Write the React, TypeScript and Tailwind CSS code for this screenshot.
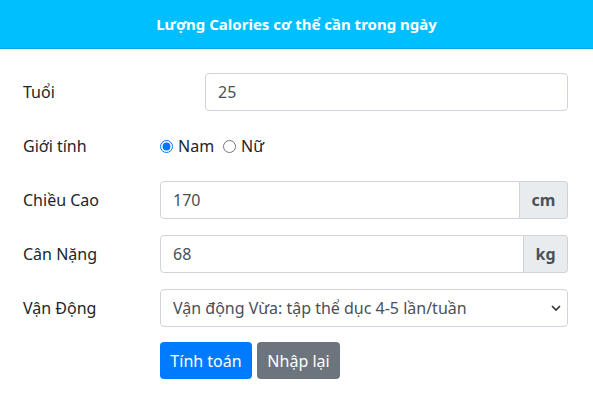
import { useState } from 'react';

const font = { fontFamily: '"Noto Sans", "Open Sans", sans-serif' };

function Row({ label, children }: { label: string; children: React.ReactNode }) {
  return (
    <div className="flex items-center h-[38px] mb-4">
      <label className="w-[137px] shrink-0 text-[16px] text-[#212529]">{label}</label>
      <div className="flex-1 flex items-center">{children}</div>
    </div>
  );
}

export default function App() {
  const [age, setAge] = useState('25');
  const [gender, setGender] = useState('nam');
  const [height, setHeight] = useState('170');
  const [weight, setWeight] = useState('68');

  const inputCls =
    'h-[38px] px-3 border border-[#ced4da] text-[16px] text-[#495057] bg-white outline-none';

  return (
    <div className="w-[593px] h-[404px] bg-white" style={font}>
      {/* Header */}
      <div className="h-[49px] bg-[#00bfff] border-b border-[#0aa6de] flex items-center justify-center">
        <h1 className="text-white font-bold text-[15px]">Lượng Calories cơ thể cần trong ngày</h1>
      </div>

      {/* Form */}
      <div className="pt-6 pl-[23px] pr-[25px]">
        <Row label="Tuổi">
          <input
            className={`${inputCls} ml-[45px] flex-1 rounded`}
            value={age}
            onChange={(e) => setAge(e.target.value)}
          />
        </Row>

        <Row label="Giới tính">
          <label className="flex items-center gap-[5px] text-[16px] text-[#212529] mr-[9px]">
            <input
              type="radio"
              name="gender"
              className="w-[13px] h-[13px] m-0 accent-[#0075ff]"
              checked={gender === 'nam'}
              onChange={() => setGender('nam')}
            />
            Nam
          </label>
          <label className="flex items-center gap-[5px] text-[16px] text-[#212529]">
            <input
              type="radio"
              name="gender"
              className="w-[13px] h-[13px] m-0"
              checked={gender === 'nu'}
              onChange={() => setGender('nu')}
            />
            Nữ
          </label>
        </Row>

        <Row label="Chiều Cao">
          <input
            className={`${inputCls} flex-1 min-w-0 rounded-l`}
            value={height}
            onChange={(e) => setHeight(e.target.value)}
          />
          <span className="h-[38px] w-[48px] flex items-center justify-center bg-[#e9ecef] border border-l-0 border-[#ced4da] rounded-r font-bold text-[16px] text-[#495057]">
            cm
          </span>
        </Row>

        <Row label="Cân Nặng">
          <input
            className={`${inputCls} flex-1 min-w-0 rounded-l`}
            value={weight}
            onChange={(e) => setWeight(e.target.value)}
          />
          <span className="h-[38px] w-[44px] flex items-center justify-center bg-[#e9ecef] border border-l-0 border-[#ced4da] rounded-r font-bold text-[16px] text-[#495057]">
            kg
          </span>
        </Row>

        <Row label="Vận Động">
          <div className="relative flex-1">
            <select
              className={`${inputCls} w-full rounded appearance-none`}
              style={font}
              defaultValue="vua"
            >
              <option value="it">Ít vận động</option>
              <option value="nhe">Vận động nhẹ: tập thể dục 1-3 lần/tuần</option>
              <option value="vua">Vận động Vừa: tập thể dục 4-5 lần/tuần</option>
              <option value="nhieu">Vận động nhiều</option>
            </select>
            <svg
              className="absolute right-[7px] top-1/2 -translate-y-1/2 pointer-events-none"
              width="10"
              height="7"
              viewBox="0 0 10 7"
            >
              <path d="M1 1.5 L5 5.5 L9 1.5" fill="none" stroke="#333" strokeWidth="1.6" />
            </svg>
          </div>
        </Row>

        <div className="flex gap-[5px] pl-[137px] -mt-[1px]">
          <button className="h-[37px] w-[92px] rounded bg-[#007bff] text-white text-[16px]">Tính toán</button>
          <button className="h-[37px] w-[83px] rounded bg-[#6c757d] text-white text-[16px]">Nhập lại</button>
        </div>
      </div>
    </div>
  );
}
